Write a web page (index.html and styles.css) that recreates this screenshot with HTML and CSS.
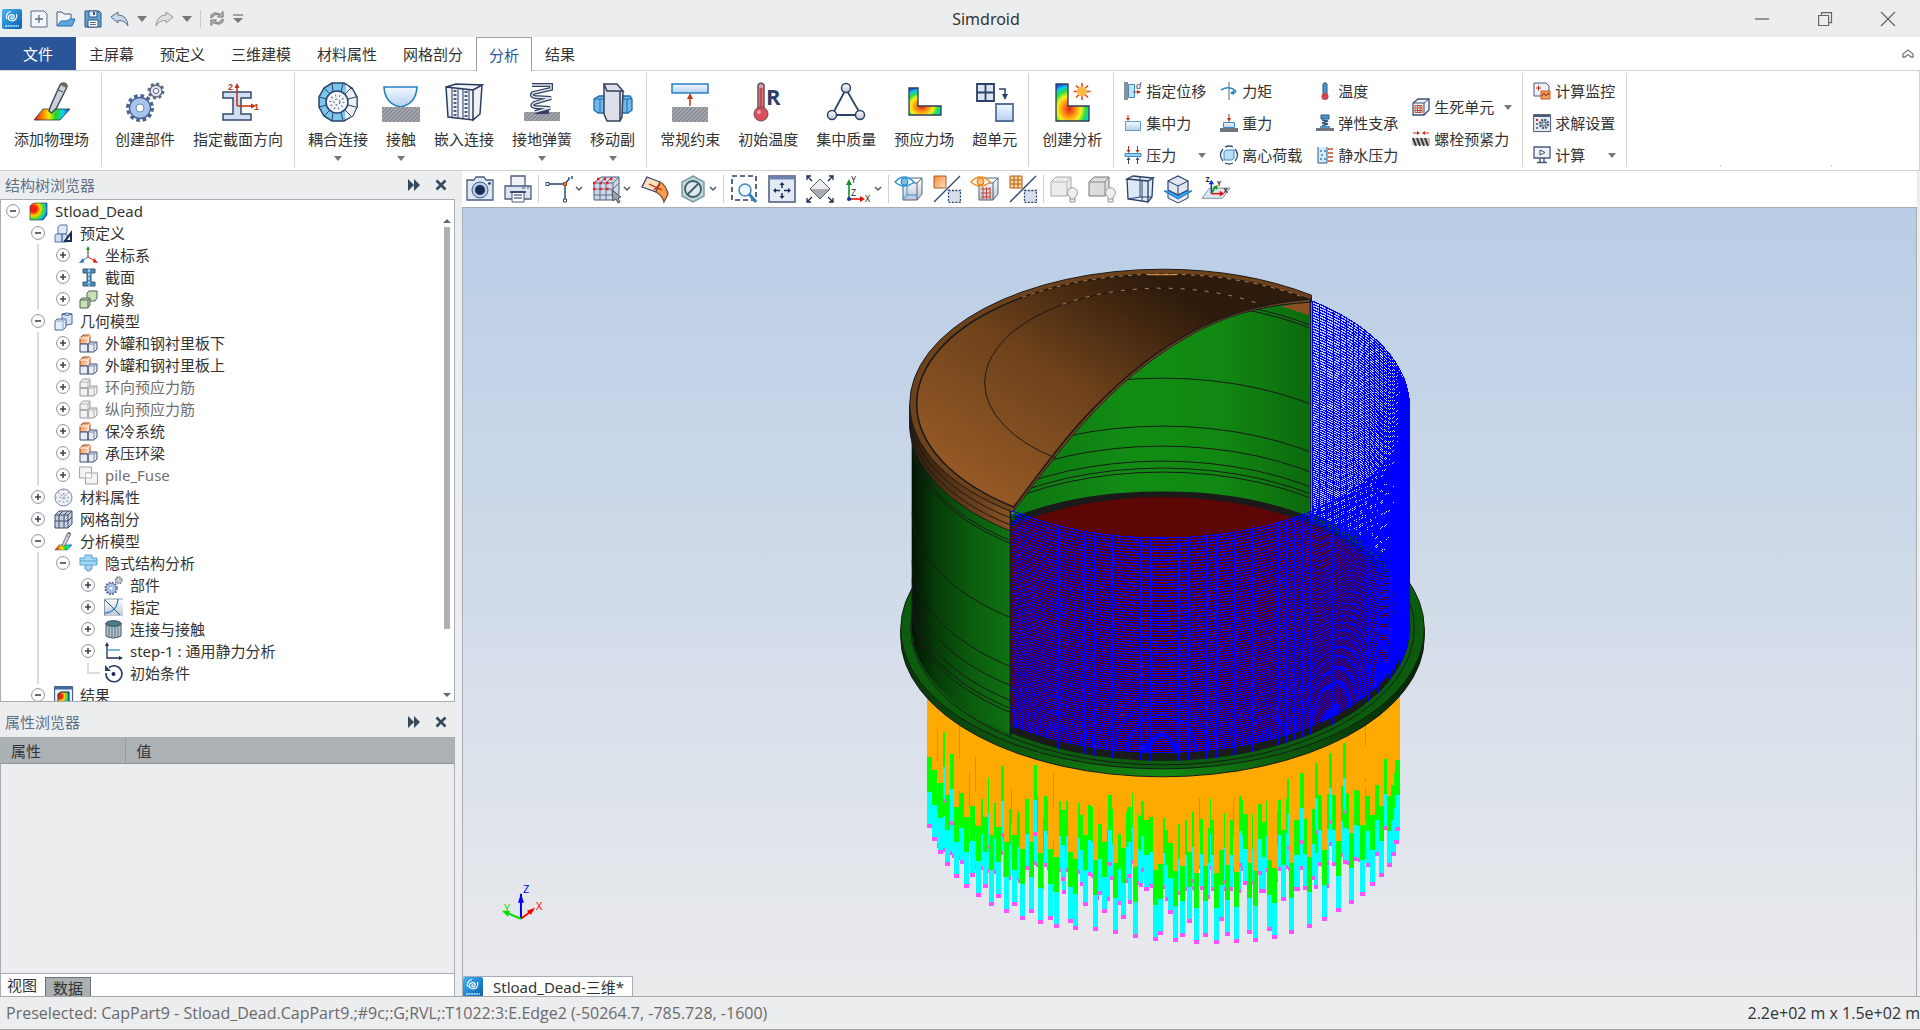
FILE: index.html
```html
<!DOCTYPE html>
<html lang="zh-CN">
<head>
    <meta charset="UTF-8">
    <title>Simdroid</title>
    <link rel="stylesheet" href="styles.css">
</head>
<body>

<!-- shared gradients and icons -->
<svg class="defs" width="0" height="0" aria-hidden="true">
    <defs>
        <linearGradient id="rainbow"><stop offset="0" stop-color="#e01010"/><stop offset=".25" stop-color="#ff8a00"/><stop offset=".42" stop-color="#f4f000"/><stop offset=".6" stop-color="#20d820"/><stop offset=".8" stop-color="#10d0f0"/><stop offset="1" stop-color="#1040e0"/></linearGradient>
        <radialGradient id="heat" cx=".4" cy=".68" r=".72"><stop offset="0" stop-color="#e02020"/><stop offset=".3" stop-color="#ff9a10"/><stop offset=".5" stop-color="#f6f020"/><stop offset=".7" stop-color="#20e040"/><stop offset=".85" stop-color="#10c8f0"/><stop offset="1" stop-color="#1050e8"/></radialGradient>
        <radialGradient id="heat2" cx=".2" cy=".35" r=".95"><stop offset="0" stop-color="#f02010"/><stop offset=".2" stop-color="#f02010"/><stop offset=".42" stop-color="#ffd000"/><stop offset=".6" stop-color="#50e020"/><stop offset=".75" stop-color="#10c0e0"/><stop offset="1" stop-color="#1020d0"/></radialGradient>
        <linearGradient id="sky" x2="0" y2="1"><stop offset="0" stop-color="#f4f9fe"/><stop offset="1" stop-color="#b4d0ee"/></linearGradient>
        <linearGradient id="steel" x2="0" y2="1"><stop offset="0" stop-color="#ffffff"/><stop offset="1" stop-color="#bcc4d4"/></linearGradient>
        <linearGradient id="orange" x2="1" y2="1"><stop offset="0" stop-color="#f28a3c"/><stop offset="1" stop-color="#fde0c4"/></linearGradient>
        <linearGradient id="brand" x2="1" y2="1"><stop offset="0" stop-color="#42b4f4"/><stop offset="1" stop-color="#0a5cac"/></linearGradient>
        <pattern id="hatch" width="4" height="4" patternUnits="userSpaceOnUse"><rect width="4" height="4" fill="#a0a4aa"/><path d="M0 4 4 0" stroke="#7d828a"/></pattern>

        <symbol id="i-logo" viewBox="0 0 20 20"><rect width="20" height="20" rx="2" fill="url(#brand)"/><path d="M10.500 8c-1.500-.8-2.600 1.300-.6 1.800 2.600.4 3.300-3.400.2-4.100C6.400 5 4.600 10 8.500 11.500c4.500 1.500 7.200-2.500 6-6.500M9 2.500C5 3 3.500 7 5 10" fill="none" stroke="#fff" stroke-width="1.200"/><path d="M3 17h14" stroke="#8fd0f8" stroke-width="2" stroke-dasharray="2 .6"/></symbol>
        <symbol id="i-plus" viewBox="0 0 14 14"><circle cx="7" cy="7" r="6.400" fill="#fff" stroke="#8c9296"/><path d="M4 7h6M7 4v6" stroke="#3c4650" stroke-width="1.600"/></symbol>
        <symbol id="i-minus" viewBox="0 0 14 14"><circle cx="7" cy="7" r="6.400" fill="#fff" stroke="#8c9296"/><path d="M4 7h6" stroke="#3c4650" stroke-width="1.600"/></symbol>
        <symbol id="i-brush" viewBox="0 0 40 40"><path d="M11 27h27l-10 11H2z" fill="url(#rainbow)" stroke="#26324a" stroke-width=".8"/><path d="M17 29l2-6 9-20q2-3 5-1.500 3 1.500 1.500 4.500l-10 20-5 5z" fill="#cdd2da" stroke="#444c5c" stroke-width="1.500"/><path d="M28 3q2-3 5-1.500 3 1.500 1.500 4.500z" fill="#7a6650"/><path d="M26 8l5 2" stroke="#444c5c"/></symbol>
        <symbol id="i-gears" viewBox="0 0 40 40"><circle cx="15" cy="26" r="12" fill="none" stroke="#4a6494" stroke-width="4" stroke-dasharray="3.600 2.683"/><circle cx="15" cy="26" r="10.500" fill="#a9c4ea" stroke="#4a6494" stroke-width="1.300"/><circle cx="15" cy="26" r="4" fill="#fff" stroke="#6b8fc4"/><circle cx="31" cy="9" r="7" fill="none" stroke="#5c6680" stroke-width="3" stroke-dasharray="2.800 2.700"/><circle cx="31" cy="9" r="6" fill="#dfe3ea" stroke="#5c6680" stroke-width="1.300"/><circle cx="31" cy="9" r="2.600" fill="#fff" stroke="#5c6680"/></symbol>
        <symbol id="i-hydro" viewBox="0 0 18 18"><path d="M2 1v16h9V1" fill="#d6ecfa" stroke="#30557e"/><path d="M4 5h2M8 5h2M5 9h2M4 13h2M8 13h2" stroke="#2d86c0" stroke-width="1.500"/><path d="M17 3h-5M17 7h-5M17 11h-5M17 15h-5" stroke="#c04a2a" stroke-width="1.300"/></symbol>
        <symbol id="i-part" viewBox="0 0 19 19"><path d="M1 4l3-3h7v7l-2 2H1z" fill="url(#orange)" stroke="#a0522c"/><path d="M1 4h8l2-3M9 4v6" fill="none" stroke="#fff"/><path d="M1 10h8v8H1zM9 10l2-2h7v7l-3 3H9z" fill="#e9ebf2" stroke="#3d4f74"/><path d="M9 10h6l3-2M15 10v8" fill="none" stroke="#7c88a4"/></symbol>
        <symbol id="i-part-off" viewBox="0 0 19 19"><path d="M1 4l3-3h7v7l-2 2H1zM1 10h8v8H1zM9 10l2-2h7v7l-3 3H9z" fill="#f1f1f1" stroke="#9a9a9a"/><path d="M1 4h8l2-3M9 4v6M9 10h6l3-2M15 10v8" fill="none" stroke="#b4b4b4"/></symbol>
        <symbol id="i-box" viewBox="0 0 28 28"><path d="M8 8l6-5h13v16l-5 6H8z" fill="url(#steel)" stroke="#55627c"/><path d="M8 8h14l5-5M22 8v17" fill="none" stroke="#55627c"/></symbol>
        <symbol id="i-slash" viewBox="0 0 28 28"><path d="M1 27 27 1" stroke="#2c4570" stroke-width="1.300"/><path d="M15.500 15.500h12v12h-12z" fill="#d8dee9" stroke="#2c4570" stroke-width="1.300" stroke-dasharray="2 1.400"/></symbol>
        <symbol id="i-bulb" viewBox="0 0 28 28"><path d="M1 7l5-5h15v13l-4 6H1z" fill="#ececec" stroke="#a8a8a8"/><path d="M1 7h16l4-5M17 7v14" fill="none" stroke="#bbb"/><path d="M20 22a5 5 0 1 1 5 0v5h-5z" fill="#eee" stroke="#999"/><path d="M20 24h5" stroke="#999"/></symbol>
        <symbol id="i-bulb-dark" viewBox="0 0 28 28"><path d="M1 7l5-5h15v13l-4 6H1z" fill="#dcdcdc" stroke="#777"/><path d="M1 7h16l4-5M17 7v14" fill="none" stroke="#888"/><path d="M20 22a5 5 0 1 1 5 0v5h-5z" fill="#eee" stroke="#999"/><path d="M20 24h5" stroke="#999"/></symbol>
        <symbol id="i-dock" viewBox="0 0 14 12"><path d="M1 0l6 6-6 6zM7 0l6 6-6 6z" fill="#34495c"/></symbol>
        <symbol id="i-x" viewBox="0 0 12 12"><path d="M1.500 1.500l9 9M10.500 1.500l-9 9" stroke="#34495c" stroke-width="2.600"/></symbol>
        <symbol id="i-chev" viewBox="0 0 8 6"><path d="M1 1l3 3 3-3" fill="none" stroke="#4a5c66" stroke-width="1.500"/></symbol>
    </defs>
</svg>

<header class="titlebar">
    <div class="quick">
        <svg width="20" height="20"><use href="#i-logo"/></svg>
        <button aria-label="新建"><svg width="18" height="18" viewBox="0 0 18 18"><path d="M1 1h13l3 3v13H1z" fill="#f2f5f9" stroke="#5d6b84"/><path d="M5 9h8M9 5v8" stroke="#5d6b84" stroke-width="1.300"/></svg></button>
        <button aria-label="打开"><svg width="20" height="18" viewBox="0 0 20 18"><path d="M1 16V2h5l2 2h7v5" fill="#eef3fa" stroke="#4a5a78"/><path d="M1 16l4-5h6l3-2h5l-3 7z" fill="#5fa8dc" stroke="#2a6cac"/></svg></button>
        <button aria-label="保存"><svg width="18" height="18" viewBox="0 0 18 18"><path d="M1 1h14l2 2v14H1z" fill="#5fa4d8" stroke="#30557e"/><path d="M5 1h8v6H5z" fill="#e6eef6" stroke="#30557e"/><path d="M9 2h2v3H9z" fill="#30557e"/><path d="M4 10h10v7H4z" fill="#fff" stroke="#30557e"/><path d="M6 12.500h6M6 14.500h6" stroke="#5d6b84"/></svg></button>
        <button aria-label="撤销"><svg width="19" height="16" viewBox="0 0 19 16"><path d="M1 6l7-5v3q9 0 10 11-3-6-10-5.500V12z" fill="#c8d8ec" stroke="#5c6a84"/></svg></button>
        <button aria-label="撤销列表"><svg width="10" height="6" viewBox="0 0 10 6"><path d="M0 0h10L5 6z" fill="#777"/></svg></button>
        <button aria-label="重做"><svg width="19" height="16" viewBox="0 0 19 16"><path d="M18 6l-7-5v3Q2 4 1 15q3-6 10-5.500V12z" fill="#dcdee0" stroke="#999"/></svg></button>
        <button aria-label="重做列表"><svg width="10" height="6" viewBox="0 0 10 6"><path d="M0 0h10L5 6z" fill="#777"/></svg></button>
        <i class="quick-sep"></i>
        <button aria-label="刷新"><svg width="16" height="17" viewBox="0 0 17 17"><path d="M2 8V5q3-4 8-2l2 1 3-3v6H9l2-2Q6 3 4 7zM15 9v3q-3 4-8 2l-2-1-3 3v-6h6l-2 2q5 2 7-2z" fill="#b0b0b0" stroke="#777"/></svg></button>
        <button aria-label="自定义"><svg width="10" height="10" viewBox="0 0 10 10"><path d="M0 1h10" stroke="#777" stroke-width="1.300"/><path d="M0 4h10L5 9z" fill="#777"/></svg></button>
    </div>
    <h1>Simdroid</h1>
    <div class="window-buttons">
        <button aria-label="最小化"><svg width="14" height="14" viewBox="0 0 14 14"><path d="M0 7h14" stroke="#666" stroke-width="1.300"/></svg></button>
        <button aria-label="还原"><svg width="14" height="14" viewBox="0 0 14 14"><path d="M.6 3.500h10v10H.6zM3.500 3.500V.6h10v10h-3" fill="none" stroke="#666" stroke-width="1.200"/></svg></button>
        <button aria-label="关闭"><svg width="14" height="14" viewBox="0 0 14 14"><path d="M0 0l14 14M14 0L0 14" stroke="#666" stroke-width="1.300"/></svg></button>
    </div>
</header>

<nav class="tabs">
    <button class="file">文件</button>
    <button>主屏幕</button>
    <button>预定义</button>
    <button>三维建模</button>
    <button>材料属性</button>
    <button>网格剖分</button>
    <button class="active">分析</button>
    <button>结果</button>
    <button class="collapse" aria-label="收起功能区"><svg width="12" height="10" viewBox="0 0 12 10"><path d="M1 5l5-4 5 4v3H9L6 5.500 3 8H1z" fill="none" stroke="#777c84" stroke-width="1.300"/></svg></button>
</nav>

<section class="ribbon">
    <div class="group">
        <button class="big"><svg><use href="#i-brush"/></svg>添加物理场</button>
    </div>
    <div class="group">
        <button class="big"><svg><use href="#i-gears"/></svg>创建部件</button>
        <button class="big"><svg viewBox="0 0 40 40"><path d="M5 10h28v6H23v16h10v6H5v-6h10V16H5z" fill="#cfdef0" stroke="#33486c" stroke-width="1.500"/><path d="M19 24V5M19 24h14" stroke="#c03010" stroke-width="1.500"/><path d="M16.500 6h5L19 1zM33 21.500v5l5-2.500z" fill="#c03010"/><text x="10" y="8" class="mark">2</text><text x="36" y="28" class="mark">1</text></svg>指定截面方向</button>
    </div>
    <div class="group">
        <button class="big drop"><svg viewBox="0 0 40 40"><path d="M14 1h12l8 5 5 9v10l-5 9-8 5H14l-8-5-5-9V15l5-9z" fill="#7cc6ee" stroke="#2a4468" stroke-width="1.500"/><path d="M28 2l7 6 4 8v9l-4 9-8 4" fill="#eef1f6" stroke="#2a4468"/><circle cx="19" cy="20" r="11" fill="#f4f6fa" stroke="#2a4468" stroke-width="1.500"/><path d="M14 1l1 9M25 1l-2 9M6 6l6 6M33 6l-6 6M1 15l8 2M30 17l8-2M1 25l8-2M30 23l8 2M6 34l6-6M33 34l-6-6M14 39l1-9M25 39l-2-9" stroke="#2a4468"/><circle cx="19" cy="20" r="3" fill="none" stroke="#2a4468" stroke-dasharray="2 2"/><circle cx="19" cy="20" r="6.500" fill="none" stroke="#55709a" stroke-width="2" stroke-dasharray="1 3"/></svg>耦合连接</button>
        <button class="big drop"><svg viewBox="0 0 40 40"><path d="M3 5h33q-1 17-16.500 20Q4 22 3 5z" fill="url(#sky)" stroke="#2582c0" stroke-width="1.600"/><path d="M1 25h38v15H1z" fill="url(#hatch)"/></svg>接触</button>
        <button class="big"><svg viewBox="0 0 40 40"><path d="M2 5l10-3 26 1-9 5zM2 5l27 3v30L4 35zM38 3l-2 29-7 6V8z" fill="#f0f2f8" stroke="#2a3c60" stroke-width="1.500"/><path d="M8 6v29M14 7v29M19 7v30M25 8v30" stroke="#2a3c60"/><path d="M11 8v27M22 9v28" stroke="#4c6088" stroke-width="3" stroke-dasharray="2 2"/></svg>嵌入连接</button>
        <button class="big drop"><svg viewBox="0 0 40 40"><path d="M2 30h36v9H2z" fill="url(#hatch)"/><path d="M10 3h19v4L11 11q-3 3 2 4l16 1-17 5q-4 3 1 4l15 1-15 4h14" fill="none" stroke="#33435f" stroke-width="4"/><path d="M10 3h19v4L11 11q-3 3 2 4l16 1-17 5q-4 3 1 4l15 1-15 4" fill="none" stroke="#dfe5ee" stroke-width="1.500"/></svg>接地弹簧</button>
        <button class="big drop"><svg viewBox="0 0 40 40"><path d="M1 17l5-3h31l2 3v11l-4 3H5l-4-3z" fill="#6fbaea" stroke="#1f6aa8" stroke-width="1.300"/><path d="M1 17h38M7 17v13M34 17v13" stroke="#1f6aa8"/><path d="M11 2h13l6 7-3 0H14zM14 9h13v30H14l-3-7V2zM27 9l3 0-1 26-2 4z" fill="#dde0ea" stroke="#33405c" stroke-width="1.500"/></svg>移动副</button>
    </div>
    <div class="group">
        <button class="big"><svg viewBox="0 0 40 40"><path d="M2 2h36v9H2z" fill="url(#sky)" stroke="#2582c0" stroke-width="1.500"/><path d="M2 25h36v15H2z" fill="url(#hatch)"/><path d="M20 24V14" stroke="#c03a10" stroke-width="1.500"/><path d="M17 17h6l-3-6z" fill="#c03a10"/></svg>常规约束</button>
        <button class="big"><svg viewBox="0 0 40 40"><path d="M10 27V3q3-4 6 0v24" fill="#dca0a4" stroke="#62505c" stroke-width="1.500"/><path d="M13 6v22" stroke="#cc4850" stroke-width="3"/><circle cx="13" cy="32" r="7" fill="#d8505c" stroke="#704a58"/><circle cx="11" cy="30" r="2" fill="#f4a0a8"/><text x="18" y="23" class="letter">R</text></svg>初始温度</button>
        <button class="big"><svg viewBox="0 0 40 40"><path d="M20 7L6 33h29z" fill="none" stroke="#2c4068" stroke-width="1.800"/><g fill="url(#steel)" stroke="#2c4068" stroke-width="1.500"><circle cx="20" cy="6" r="4.500"/><circle cx="6" cy="33" r="4.500"/><circle cx="34" cy="33" r="4.500"/></g></svg>集中质量</button>
        <button class="big"><svg viewBox="0 0 40 40"><path d="M5 6h9v18h23v9H5z" fill="url(#heat)" stroke="#303c54" stroke-width="1.300"/></svg>预应力场</button>
        <button class="big"><svg viewBox="0 0 40 40"><path d="M2 2h17v17H2zM10.500 2v17M2 10.500h17" fill="#dce4f2" stroke="#2c4068" stroke-width="1.800"/><path d="M21 22h17v17H21z" fill="url(#sky)" stroke="#55719c" stroke-width="1.800"/><path d="M24 7h6v6" fill="none" stroke="#2c4068" stroke-width="1.500"/><path d="M27 12h6L30 18z" fill="#2c4068"/></svg>超单元</button>
    </div>
    <div class="group">
        <button class="big"><svg viewBox="0 0 40 40"><path d="M4 2h12v22h21v15H4z" fill="url(#heat)" stroke="#303c54" stroke-width="1.300"/><path d="M30 1v17M21.500 9.500h17M24 3.500l12 12M36 3.500l-12 12" stroke="#e04820" stroke-width="1.600"/><circle cx="30" cy="9.500" r="5" fill="#fdb848"/></svg>创建分析</button>
    </div>
    <div class="group small-group">
        <div class="column">
            <button class="small"><svg viewBox="0 0 18 18"><path d="M0 0h4v18H0z" fill="#8c9098"/><path d="M4.500 2.500h6v13h-6z" fill="#c2e2f6" stroke="#3c8cc4"/><path d="M9 10h7" stroke="#c03010"/><path d="M13 8l4 2-4 2z" fill="#c03010"/><text x="12" y="7" class="tiny">d</text></svg>指定位移</button>
            <button class="small"><svg viewBox="0 0 18 18"><path d="M1.500 7.500h15v9h-15z" fill="url(#sky)" stroke="#5a9cc8"/><path d="M4 1v5" stroke="#c03010"/><path d="M2 4h4L4 7z" fill="#c03010"/></svg>集中力</button>
            <button class="small"><svg viewBox="0 0 18 18"><path d="M1 7.500h16v3H1z" fill="#9cd0f0" stroke="#3c8cc4"/><path d="M4.500 0v6M13.500 0v6" stroke="#c03010"/><path d="M2.500 4h4l-2 3zM11.500 4h4l-2 3z" fill="#c03010"/><path d="M4.500 12v6M13.500 12v6" stroke="#34486c"/><path d="M2.500 14h4l-2-3zM11.500 14h4l-2-3z" fill="#34486c"/></svg>压力<i class="arrow"></i></button>
        </div>
        <div class="column">
            <button class="small"><svg viewBox="0 0 18 18"><path d="M9 0v18" stroke="#5a6880"/><path d="M1 8q8-5 15 1M16 9q-2 3-5 2" fill="none" stroke="#2d86c0" stroke-width="1.500"/><path d="M14 8l-4 3 4 2z" fill="#2d86c0"/></svg>力矩</button>
            <button class="small"><svg viewBox="0 0 18 18"><path d="M3.500 8.500h11v5h-11z" fill="url(#sky)" stroke="#3c8cc4"/><path d="M0 14h18v4H0z" fill="#70767e"/><path d="M9 0v6" stroke="#c03010"/><path d="M7 4h4L9 8z" fill="#c03010"/></svg>重力</button>
            <button class="small"><svg viewBox="0 0 18 18"><path d="M4 6l2-2h8v8l-2 2H4z" fill="#b8dcf4" stroke="#3c8cc4"/><path d="M3 15q-5-6 0-12M15 3q5 6 0 12M5 1q4-2 8 0M5 17q4 2 8 0" fill="none" stroke="#34486c" stroke-width="1.300"/></svg>离心荷载</button>
        </div>
        <div class="column">
            <button class="small"><svg viewBox="0 0 18 18"><path d="M7 12V2q2-3 4 0v10z" fill="#4c98cc" stroke="#30557e"/><circle cx="9" cy="14.500" r="3.500" fill="#cc4450"/></svg>温度</button>
            <button class="small"><svg viewBox="0 0 18 18"><path d="M5 1h8v4H5z" fill="#4c98cc" stroke="#30557e"/><path d="M6 6l6 1-6 2 6 1-6 2" fill="none" stroke="#30557e" stroke-width="1.500"/><path d="M4 12h10v2H4z" fill="#4c98cc"/><path d="M0 14h18v3H0z" fill="#70767e"/></svg>弹性支承</button>
            <button class="small"><svg><use href="#i-hydro"/></svg>静水压力</button>
        </div>
        <div class="column wide">
            <button class="small"><svg viewBox="0 0 18 18"><path d="M1 5l5-4h11v11l-5 5H1z" fill="#eef1f7" stroke="#3d4f74" stroke-width="1.300"/><path d="M1 5h11l5-4M12 5v12" fill="none" stroke="#3d4f74"/><path d="M3 7.500h7v7H3zM5.500 7v8M8 7v8M3 10h7M3 12.500h7" fill="none" stroke="#c05030"/></svg>生死单元<i class="arrow"></i></button>
            <button class="small"><svg viewBox="0 0 18 18"><path d="M1 3h5M17 3h-5" stroke="#c03010"/><path d="M5 1l3 2-3 2zM13 1l-3 2 3 2z" fill="#c03010"/><path d="M0 8h18v7H0z" fill="#cdbfae"/><path d="M1 8l3 8M5 8l3 8M9 8l3 8M13 8l3 8" stroke="#333c4c" stroke-width="2"/></svg>螺栓预紧力</button>
        </div>
    </div>
    <div class="group small-group">
        <div class="column last">
            <button class="small"><svg viewBox="0 0 18 18"><path d="M1 1h12l3 3v10H1z" fill="#eef1f7" stroke="#4a5a78"/><path d="M3 6h5M5.500 3.500v5" stroke="#c03010"/><path d="M8 9h9v8H8z" fill="#f2a05c" stroke="#c05a20"/><path d="M9 14l2-3 2 3 2-3 1 2" fill="none" stroke="#a02810"/></svg>计算监控</button>
            <button class="small"><svg viewBox="0 0 18 18"><path d="M.6.600h17v17H.6z" fill="#e6ebf3" stroke="#4a5a78"/><path d="M1 2h16" stroke="#4a5a78" stroke-width="2"/><path d="M3 5h2v2H3z" fill="#c03010"/><path d="M3 9h2v2H3zM3 13h2v2H3z" fill="#6c7c98"/><circle cx="11" cy="10" r="4" fill="none" stroke="#4a5a78" stroke-width="2.500" stroke-dasharray="2 1.100"/><circle cx="11" cy="10" r="2" fill="none" stroke="#4a5a78"/></svg>求解设置</button>
            <button class="small"><svg viewBox="0 0 18 18"><path d="M1 1h16v11H1z" fill="#eef1f7" stroke="#4a5a78" stroke-width="1.300"/><path d="M7 4l5 2.500L7 9z" fill="#fff" stroke="#34486c"/><path d="M7 12v4M11 12v4M4 16.500h10" stroke="#4a5a78" stroke-width="1.500"/></svg>计算<i class="arrow"></i></button>
        </div>
    </div>
    <div class="ribbon-rest"></div>
</section>

<main>
    <aside class="dock">
        <div class="dock-title">
            <h2>结构树浏览器</h2>
            <button aria-label="停靠"><svg width="14" height="12"><use href="#i-dock"/></svg></button>
            <button aria-label="关闭"><svg width="12" height="12"><use href="#i-x"/></svg></button>
        </div>
        <div class="tree-box">
            <ul class="tree">
                <li>
                    <div class="row"><button aria-label="折叠"><svg><use href="#i-minus"/></svg></button><svg viewBox="0 0 19 19"><path d="M1 4q2-3 5-3h12v12l-4 5H1z" fill="url(#heat2)" stroke="#2a2a40" stroke-width=".6"/></svg><span>Stload_Dead</span></div>
                    <ul>
                        <li>
                            <div class="row"><button aria-label="折叠"><svg><use href="#i-minus"/></svg></button><svg viewBox="0 0 19 19"><path d="M4 3l2-2h7v7l-2 2H4z" fill="#dceaf8" stroke="#5874a4"/><path d="M1 11l1-1h6v8H1zM8 10h5v8H8z" fill="#cfdff2" stroke="#5874a4"/><path d="M18 6v12h-9z" fill="#1c2c54"/><path d="M16 12v4h-3z" fill="#fff"/></svg><span>预定义</span></div>
                            <ul class="branch">
                                <li><div class="row"><button aria-label="展开"><svg><use href="#i-plus"/></svg></button><svg viewBox="0 0 19 19"><path d="M9 11V3" stroke="#333"/><path d="M7 4h4L9 0z" fill="#10a030"/><path d="M9 11l-6 4" stroke="#3078b8"/><path d="M4 12l-4 5 5-.5z" fill="#3078b8"/><path d="M9 11l7 4" stroke="#e02020"/><path d="M15 12l4 5-5-.5z" fill="#e02020"/></svg><span>坐标系</span></div></li>
                                <li><div class="row"><button aria-label="展开"><svg><use href="#i-plus"/></svg></button><svg viewBox="0 0 19 19"><path d="M4 1h12v4h-4v9h4v4H4v-4h4V5H4z" fill="#4a8cb8" stroke="#34587c"/><path d="M10 1v17" stroke="#fff" stroke-dasharray="3 1"/></svg><span>截面</span></div></li>
                                <li><div class="row"><button aria-label="展开"><svg><use href="#i-plus"/></svg></button><svg viewBox="0 0 19 19"><path d="M8 3l2-2h8v7l-2 3H8z" fill="#c8e0b4" stroke="#4e6458"/><path d="M1 10l2-2h8v7l-2 3H1z" fill="#c8e0b4" stroke="#4e6458"/><path d="M1 10h8l2-2M9 10v8" fill="none" stroke="#4e6458"/></svg><span>对象</span></div></li>
                            </ul>
                        </li>
                        <li>
                            <div class="row"><button aria-label="折叠"><svg><use href="#i-minus"/></svg></button><svg viewBox="0 0 19 19"><path d="M8 2q5-2 10 0v10q-5 2-10 0z" fill="#d4e4f6" stroke="#4a6492"/><path d="M8 2q5 3 10 0" fill="none" stroke="#4a6492"/><path d="M1 9l2-2h9v8l-3 3H1z" fill="#e2eefa" stroke="#4a6492"/><path d="M1 9h8l3-2M9 9v9" fill="none" stroke="#8ca4cc"/></svg><span>几何模型</span></div>
                            <ul class="branch">
                                <li><div class="row"><button aria-label="展开"><svg><use href="#i-plus"/></svg></button><svg><use href="#i-part"/></svg><span>外罐和钢衬里板下</span></div></li>
                                <li><div class="row"><button aria-label="展开"><svg><use href="#i-plus"/></svg></button><svg><use href="#i-part"/></svg><span>外罐和钢衬里板上</span></div></li>
                                <li><div class="row off"><button aria-label="展开"><svg><use href="#i-plus"/></svg></button><svg><use href="#i-part-off"/></svg><span>环向预应力筋</span></div></li>
                                <li><div class="row off"><button aria-label="展开"><svg><use href="#i-plus"/></svg></button><svg><use href="#i-part-off"/></svg><span>纵向预应力筋</span></div></li>
                                <li><div class="row"><button aria-label="展开"><svg><use href="#i-plus"/></svg></button><svg><use href="#i-part"/></svg><span>保冷系统</span></div></li>
                                <li><div class="row"><button aria-label="展开"><svg><use href="#i-plus"/></svg></button><svg><use href="#i-part"/></svg><span>承压环梁</span></div></li>
                                <li><div class="row off"><button aria-label="展开"><svg><use href="#i-plus"/></svg></button><svg viewBox="0 0 19 19"><path d="M.6 1h12v11H.6z" fill="#f4f4f4" stroke="#a0a0a0"/><path d="M6.500 7h12v11h-12z" fill="#f4f4f4" stroke="#a0a0a0"/><path d="M6.500 12V7h6v5z" fill="#fff" stroke="#bbb"/></svg><span>pile_Fuse</span></div></li>
                            </ul>
                        </li>
                        <li><div class="row"><button aria-label="展开"><svg><use href="#i-plus"/></svg></button><svg viewBox="0 0 19 19"><circle cx="9.500" cy="9.500" r="8.500" fill="#eef0f4" stroke="#7c88a0"/><path d="M4 4l11 11M15 4L4 15M9.500 1v17M1 9.500h17" stroke="#a8b0c0" stroke-width="1.500" stroke-dasharray="2 2"/></svg><span>材料属性</span></div></li>
                        <li><div class="row"><button aria-label="展开"><svg><use href="#i-plus"/></svg></button><svg viewBox="0 0 19 19"><path d="M1 5l4-4h13v13l-4 4H1z" fill="#c4cede" stroke="#3c4c6c"/><path d="M1 5h13l4-4M14 5v13M1 11h13l4-4M5 5v13M10 5v13M5 5l4-4M10 5l4-4" fill="none" stroke="#3c4c6c"/></svg><span>网格剖分</span></div></li>
                        <li>
                            <div class="row"><button aria-label="折叠"><svg><use href="#i-minus"/></svg></button><svg><use href="#i-brush"/></svg><span>分析模型</span></div>
                            <ul class="branch">
                                <li>
                                    <div class="row"><button aria-label="折叠"><svg><use href="#i-minus"/></svg></button><svg viewBox="0 0 19 19"><path d="M6 1h7v3h5v7h-5v4h-2v2H8v-2H6v-4H1V4h5z" fill="#a4d8f4" stroke="#5aa4d0"/><path d="M1 7h17M6 11h7" stroke="#5aa4d0"/></svg><span>隐式结构分析</span></div>
                                    <ul>
                                        <li><div class="row"><button aria-label="展开"><svg><use href="#i-plus"/></svg></button><svg><use href="#i-gears"/></svg><span>部件</span></div></li>
                                        <li><div class="row"><button aria-label="展开"><svg><use href="#i-plus"/></svg></button><svg viewBox="0 0 19 19"><path d="M0 1h19v17H0z" fill="url(#steel)"/><path d="M.5 18V1H19" fill="none" stroke="#8c98ac"/><path d="M1 2l15 15" stroke="#3c5078"/><path d="M1 15Q13 14 14 1" fill="none" stroke="#2d86c0" stroke-width="1.300"/></svg><span>指定</span></div></li>
                                        <li><div class="row"><button aria-label="展开"><svg><use href="#i-plus"/></svg></button><svg viewBox="0 0 19 19"><path d="M2 3v13q7 4 15 0V3" fill="#b8c4cc" stroke="#3c5864"/><ellipse cx="9.500" cy="3.500" rx="7.500" ry="2.800" fill="#4c7c8c" stroke="#2c4854"/><path d="M5 6v12M8 6v12M11 6v12M14 6v12" stroke="#50707c"/></svg><span>连接与接触</span></div></li>
                                        <li><div class="row"><button aria-label="展开"><svg><use href="#i-plus"/></svg></button><svg viewBox="0 0 19 19"><path d="M3 3v13h13" fill="none" stroke="#1c2c54" stroke-width="1.300"/><path d="M1 4h4L3 0zM15 14v4l4-2z" fill="#1c2c54"/><path d="M3 8h13" stroke="#50a0d8" stroke-width="1.500"/></svg><span>step-1 : 通用静力分析</span></div></li>
                                        <li><div class="row"><i class="stub"></i><svg viewBox="0 0 19 19"><path d="M5 3.500A8 8 0 1 1 2 9" fill="none" stroke="#2c4068" stroke-width="1.600"/><path d="M1 1v6h6z" fill="#2c4068"/><circle cx="9.500" cy="10" r="2" fill="#1c2c54"/></svg><span>初始条件</span></div></li>
                                    </ul>
                                </li>
                            </ul>
                        </li>
                        <li><div class="row"><button aria-label="折叠"><svg><use href="#i-minus"/></svg></button><svg viewBox="0 0 19 19"><path d="M.6.600h18v18H.6z" fill="#e8eef8" stroke="#3c5078"/><path d="M0 2h19" stroke="#4468a0" stroke-width="3"/><path d="M4 8l3-2h8v9l-3 3H4z" fill="url(#heat2)" stroke="#222"/></svg><span>结果</span></div></li>
                    </ul>
                </li>
            </ul>
            <div class="scroll"><i class="up"></i><i class="thumb"></i><i class="down"></i></div>
        </div>
        <div class="dock-title second">
            <h2>属性浏览器</h2>
            <button aria-label="停靠"><svg width="14" height="12"><use href="#i-dock"/></svg></button>
            <button aria-label="关闭"><svg width="12" height="12"><use href="#i-x"/></svg></button>
        </div>
        <div class="props-box">
            <table class="props">
                <thead><tr><th>属性</th><th>值</th></tr></thead>
            </table>
        </div>
        <div class="dock-tabs">
            <button>视图</button>
            <button class="pressed">数据</button>
        </div>
    </aside>

    <section class="workspace">
        <div class="toolbar">
            <button aria-label="截图"><svg viewBox="0 0 28 28"><path d="M1 5h7l2-3h8l2 3h7v20H1z" fill="#dbe7f5" stroke="#4c5c7c" stroke-width="1.300"/><circle cx="14" cy="15" r="8" fill="#b8cce6" stroke="#4c5c7c"/><circle cx="14" cy="15" r="5" fill="#1c2c58"/><circle cx="23.500" cy="8.500" r="1.300" fill="#1c2c58"/></svg></button>
            <button aria-label="打印"><svg viewBox="0 0 28 28"><path d="M7 11V1h14v10" fill="#f0f3f8" stroke="#4c5c7c" stroke-width="1.300"/><path d="M1 11h26v13H1z" fill="#dbe3ef" stroke="#4c5c7c" stroke-width="1.300"/><path d="M8 17h12v10H8z" fill="#fff" stroke="#4c5c7c"/><path d="M10 20h8M10 23h8" stroke="#1c2c58"/><path d="M6 17h16" stroke="#1c2c58" stroke-width="1.500"/><path d="M18 13h3M23 13h2" stroke="#4c5c7c"/></svg></button>
            <i class="sep"></i>
            <button class="menu" aria-label="选点"><svg viewBox="0 0 28 28"><path d="M2 9h18v17M20 9l4-5V2M27 1v3" fill="none" stroke="#2c4068" stroke-width="1.400"/><path d="M1 7.500h3v3H1zM18.500 24h3v3h-3z" fill="#fff" stroke="#2c4068"/><path d="M18.500 7.500h3v3h-3z" fill="#f08040" stroke="#a04010"/></svg><svg class="chev"><use href="#i-chev"/></svg></button>
            <button class="menu" aria-label="选网格"><svg viewBox="0 0 28 28"><path d="M1 8l7-6h18v17l-5 6H1z" fill="#d0d8e6" stroke="#4c5c7c"/><path d="M1 8h19l6-6M20 8v17M7 8v17M13 8v17M1 14h19l6-6M1 20h19M7 8l6-6M13 8l6-6" fill="none" stroke="#5a6a90"/><path d="M0 8h18M0 14h18M4 4h18" stroke="#f02020" stroke-width="2.400" stroke-dasharray="2.500 4"/><path d="M19 15l1 11 3-2 2 4 2-1-2-4 3-1z" fill="#9aa0a8" stroke="#50565e"/></svg><svg class="chev"><use href="#i-chev"/></svg></button>
            <button aria-label="选面"><svg viewBox="0 0 28 28"><path d="M6 2l13 5-4 10L1 12z" fill="#fde0c0" stroke="#34406c" stroke-width="1.300"/><path d="M19 7q6 3 8 12l-4 8q-2-7-8-10z" fill="#f4a050" stroke="#7c4c28" stroke-width="1.300"/><path d="M8 9l13 6M19 9l-6 6" stroke="#c02810" stroke-width="1.300"/></svg></button>
            <button class="menu" aria-label="取消选择"><svg viewBox="0 0 28 28"><path d="M14 1l11 6v14l-11 6-11-6V7z" fill="#c0d8d8" stroke="#7c9ca4" stroke-width="1.500"/><circle cx="14" cy="14" r="8" fill="#dce8ea" stroke="#3c5c6c" stroke-width="1.800"/><path d="M8.500 19.500l11-11" stroke="#3c5c6c" stroke-width="1.800"/></svg><svg class="chev"><use href="#i-chev"/></svg></button>
            <i class="sep"></i>
            <button aria-label="框选缩放"><svg viewBox="0 0 28 28"><path d="M2 1h24v24H2z" fill="none" stroke="#2c4068" stroke-width="1.600" stroke-dasharray="5 3"/><circle cx="15" cy="15" r="6" fill="#eef7fd" stroke="#4a8cc0" stroke-width="1.600"/><path d="M19 19l7 8" stroke="#3080c0" stroke-width="3"/></svg></button>
            <button aria-label="适合窗口"><svg viewBox="0 0 28 28"><path d="M1 1h26v26H1z" fill="#e4eaf4" stroke="#4a5a7c" stroke-width="1.500"/><path d="M1 3h26" stroke="#6c84b0" stroke-width="3"/><path d="M14 9v4M14 18v4M8 15.500h4M16 15.500h4" stroke="#1c2c58" stroke-width="1.500"/><path d="M11.500 10h5l-2.500-3zM11.500 21h5l-2.500 3zM8 13v5l-3-2.500zM20 13v5l3-2.500z" fill="#1c2c58"/></svg></button>
            <button aria-label="等轴测"><svg viewBox="0 0 28 28"><path d="M14 4l10 10H4z" fill="#ececec"/><path d="M4 14h20L14 24z" fill="#a8acb0"/><path d="M14 4l10 10-10 10L4 14z" fill="none" stroke="#55606c"/><path d="M1 5V1h4M23 1h4v4M27 23v4h-4M5 27H1v-4M1 1l5 5M27 1l-5 5M27 27l-5-5M1 27l5-5" fill="none" stroke="#1c2c58" stroke-width="1.300"/></svg></button>
            <button class="menu" aria-label="视向"><svg viewBox="0 0 28 28"><path d="M5 24V8" stroke="#109030" stroke-width="1.600"/><path d="M2 10h6L5 4z" fill="#109030"/><path d="M5 24h13" stroke="#e01010" stroke-width="1.600"/><path d="M16 21v6l5-3z" fill="#e01010"/><circle cx="5" cy="24" r="2" fill="#1030a0"/><text x="7" y="8" class="axis">Y</text><text x="7" y="21" class="axis">Z</text><text x="21" y="27" class="axis">X</text></svg><svg class="chev"><use href="#i-chev"/></svg></button>
            <i class="sep"></i>
            <button aria-label="显示几何"><svg viewBox="0 0 28 28"><use href="#i-box"/><path d="M12 8v12h10M12 20l-4 5" fill="none" stroke="#2d96d8"/><path d="M0 7q9-10 19 0-10 8-19 0z" fill="#fff" stroke="#2d96d8" stroke-width="1.400"/><circle cx="9.500" cy="6.500" r="3.500" fill="#7cc4f0" stroke="#2d78b8"/></svg></button>
            <button aria-label="几何开关"><svg viewBox="0 0 28 28"><use href="#i-slash"/><path d="M1 1h12v12H1z" fill="url(#orange)" stroke="#b05c24"/></svg></button>
            <button aria-label="显示网格"><svg viewBox="0 0 28 28"><use href="#i-box"/><path d="M10 14h10M10 18h10M10 22h10M12 12v12M15.500 12v12M19 12v12" stroke="#c04838"/><path d="M0 7q9-10 19 0-10 8-19 0z" fill="#fff" stroke="#f09020" stroke-width="1.400"/><circle cx="9.500" cy="6.500" r="3.500" fill="#fcc070" stroke="#d87010"/></svg></button>
            <button aria-label="网格开关"><svg viewBox="0 0 28 28"><use href="#i-slash"/><path d="M1 1h12v12H1zM5 1v12M9 1v12M1 5h12M1 9h12" fill="#fcd8a0" stroke="#b05c10"/></svg></button>
            <i class="sep"></i>
            <button aria-label="隐藏部件"><svg><use href="#i-bulb"/></svg></button>
            <button aria-label="显示部件"><svg><use href="#i-bulb-dark"/></svg></button>
            <button aria-label="透明"><svg viewBox="0 0 28 28"><path d="M1 4l6-3 20 2-5 3zM1 4l21 2v21L2 24zM27 3l-1 19-4 5V6z" fill="#dce8f6" stroke="#2c4068" stroke-width="1.300"/><path d="M14 2v20l-12 2M14 22l12 0M16 6v20" fill="none" stroke="#2c4068"/></svg></button>
            <button aria-label="剖切"><svg viewBox="0 0 28 28"><path d="M4 18l10-4 10 4v5l-10 5-10-5z" fill="#e8ecf4" stroke="#2c4068"/><path d="M0 16h28l-14 8z" fill="#3ca0f0" stroke="#1c78c8"/><path d="M4 6l10-5 10 5v9l-10 5-10-5z" fill="#e2e6f0" stroke="#2c4068" stroke-width="1.200"/><path d="M4 6l10 5 10-5M14 11v9" fill="none" stroke="#2c4068"/></svg></button>
            <button aria-label="坐标平面"><svg viewBox="0 0 30 28"><path d="M8 13h22l-8 11H0z" fill="#dce6f0" stroke="#7c8ca0"/><path d="M10 19V7" stroke="#1030d0" stroke-width="1.600"/><path d="M7 9h6l-3-5z" fill="#1030d0"/><path d="M10 19l4-7" stroke="#10a020" stroke-width="2"/><path d="M12 11l5-1-1 5z" fill="#10a020"/><path d="M10 19h11" stroke="#e01010" stroke-width="1.600"/><path d="M19 16v6l5-3z" fill="#e01010"/><text x="4" y="6" class="tri">Z</text><text x="16" y="11" class="tri">Y</text><text x="23" y="18" class="tri">X</text></svg></button>
        </div>
        <div class="viewport">
            <svg class="model" viewBox="462 207 1454 768">
                <defs>
                    <linearGradient id="roof" gradientUnits="userSpaceOnUse" x1="1150" y1="275" x2="1010" y2="500"><stop offset="0" stop-color="#2e1b0c"/><stop offset=".15" stop-color="#40260f"/><stop offset=".5" stop-color="#6e421b"/><stop offset="1" stop-color="#935825"/></linearGradient>
                    <linearGradient id="wall"><stop offset="0" stop-color="#021402"/><stop offset=".25" stop-color="#063c08"/><stop offset=".6" stop-color="#0b5c0e"/><stop offset="1" stop-color="#0f7211"/></linearGradient>
                    <linearGradient id="inner"><stop offset="0" stop-color="#0e7410"/><stop offset=".4" stop-color="#128d14"/><stop offset=".7" stop-color="#118811"/><stop offset="1" stop-color="#0c6a0e"/></linearGradient>
                    <linearGradient id="band"><stop offset="0" stop-color="#2e1b0c"/><stop offset="1" stop-color="#8a5223"/></linearGradient>
                    <linearGradient id="edge"><stop offset="0" stop-color="#083408"/><stop offset=".5" stop-color="#138a13"/><stop offset="1" stop-color="#052405"/></linearGradient>
                    <clipPath id="innerClip"><path id="innerShape" d="M1012 511C1040 475 1065 440 1094 410 1130 373 1160 350 1201 328 1235 311 1270 303 1309 301V519A248 134 0 0 0 1012 519z"/></clipPath>
                    <clipPath id="leftClip"><path d="M911 425A251 134 0 0 0 1010 529V733A251 134 0 0 1 911 626z"/></clipPath>
                </defs>
                <g id="piles" shape-rendering="crispEdges"></g>
                <!-- foundation slab -->
                <path d="M900 628v8a262 140 0 0 0 524 0v-8z" fill="url(#edge)" stroke="#1a1a1a"/>
                <ellipse cx="1162" cy="628" rx="262" ry="140" fill="#0b5c0d" stroke="#1a1a1a"/>
                <ellipse cx="1162" cy="627" rx="252" ry="137" fill="none" stroke="#1a1a1a"/>
                <ellipse cx="1162" cy="626" rx="248" ry="134" fill="#1a1a1a"/>
                <ellipse cx="1162" cy="624" rx="240" ry="128" fill="#5c0606"/>
                <!-- inner wall seen through the cut -->
                <use href="#innerShape" fill="url(#inner)"/>
                <path d="M1280 305L1309 301V314z" fill="#8a5223"/>
                <g id="innerRings" clip-path="url(#innerClip)" fill="none" stroke="#1a1a1a"></g>
                <path d="M1014 518A248 134 0 0 1 1162 493 248 134 0 0 1 1309 518" fill="none" stroke="#1a1a1a" stroke-width="5"/>
                <!-- outer wall -->
                <path d="M911 425A251 134 0 0 0 1010 529V733A251 134 0 0 1 911 626z" fill="url(#wall)"/>
                <g id="outerRings" clip-path="url(#leftClip)" fill="none" stroke="#1a1a1a"></g>
                <!-- ring beam and dome -->
                <path d="M909 403V427A252 134 0 0 0 1010 530V510z" fill="url(#band)" stroke="#1a1a1a"/>
                <path d="M909 408A252 134 0 0 0 1010 517M909 416A252 134 0 0 0 1010 524" fill="none" stroke="#1a1a1a"/>
                <path d="M1012 511A253 135 0 0 1 909 403 253 135 0 0 1 1162 268 253 135 0 0 1 1311 294V301C1270 303 1235 311 1201 328 1160 350 1130 373 1094 410 1065 440 1040 475 1012 511z" fill="#6e421b" stroke="#1a1a1a"/>
                <path d="M1013 506A246 130 0 0 1 916 403 246 130 0 0 1 1162 273 246 130 0 0 1 1308 298C1268 301 1235 309 1200 326 1158 348 1128 371 1092 408 1063 438 1038 473 1013 506z" fill="url(#roof)" stroke="#1a1a1a" stroke-width="1.500"/>
                <path d="M1055 457A178 95 0 0 1 984 382 178 95 0 0 1 1162 287 178 95 0 0 1 1266 305" fill="none" stroke="#1a1a1a"/>
                <path d="M1022 296A246 130 0 0 1 1162 273 246 130 0 0 1 1300 295" fill="none" stroke="#c88040" stroke-dasharray="4 5"/>
                <path d="M1062 303A178 95 0 0 1 1162 287 178 95 0 0 1 1260 303" fill="none" stroke="#c88040" stroke-dasharray="4 8"/>
                <path d="M1147 273.500h30" stroke="#f0a050"/>
                <path d="M1010 510V735M1310 297V512" stroke="#101c30" stroke-width="2"/>
                <g id="mesh" fill="none" stroke="#0000ff" shape-rendering="crispEdges"></g>
                <!-- axis triad -->
                <g stroke-width="2"><path d="M520 918V893" stroke="#00f"/><path d="M520 918L532 909" stroke="#f00"/><path d="M520 918L503 911" stroke="#0d0"/></g>
                <path d="M517 902h6l-3-9z" fill="#00f"/><path d="M534 907l-8 3 4 4z" fill="#f00"/><path d="M501 910l8 0-2 6z" fill="#0d0"/>
                <g class="triad"><text x="522" y="892" fill="#00f">Z</text><text x="535" y="909" fill="#f00">X</text><text x="503" y="911" fill="#0d0">Y</text></g>
            </svg>
        </div>
        <div class="view-tabs">
            <button><svg width="20" height="20"><use href="#i-logo"/></svg>Stload_Dead-三维*</button>
        </div>
    </section>
</main>

<footer class="status">
    <span>Preselected: CapPart9 - Stload_Dead.CapPart9.;#9c;:G;RVL;:T1022:3:E.Edge2 (-50264.7, -785.728, -1600)</span>
    <span class="extent">2.2e+02 m x 1.5e+02 m</span>
</footer>

<script src="model.js"></script>
</body>
</html>
```
FILE: styles.css
```css
* {
    box-sizing: border-box;
}
body {
    margin: 0;
    height: 100vh;
    display: flex;
    flex-direction: column;
    overflow: hidden;
    background: #ecedef;
    color: #333;
    font-family: "Noto Sans", "Noto Sans CJK SC", sans-serif;
    font-size: 15px;
    line-height: 20px;
}
button {
    border: none;
    background: none;
    padding: 0;
    margin: 0;
    color: inherit;
    font: inherit;
    white-space: nowrap;
}
svg {
    display: block;
    flex: none;
    overflow: visible;
}
h1, h2 {
    margin: 0;
    font-size: 15px;
    font-weight: normal;
}
ul {
    list-style: none;
    margin: 0;
    padding: 0;
}
.defs {
    position: absolute;
}

/* title bar */
.titlebar {
    display: grid;
    grid-template-columns: 1fr auto 1fr;
    align-items: center;
    height: 37px;
    flex: none;
    padding-left: 2px;
}
.titlebar h1 {
    padding-left: 50px;
    font-size: 16px;
}
.quick {
    display: flex;
    align-items: center;
    gap: 8px;
}
.quick-sep {
    width: 1px;
    height: 18px;
    background: #c8cacc;
}
.window-buttons {
    display: flex;
    justify-content: flex-end;
    gap: 49px;
    padding-right: 25px;
}

/* ribbon tabs */
.tabs {
    display: flex;
    height: 33px;
    flex: none;
    background: #fff;
}
.tabs button {
    padding: 0 13px;
}
.tabs .file {
    padding: 0 23px;
    background: #2a5699;
    color: #fff;
}
.tabs .active {
    height: 34px;
    padding: 0 12px;
    background: #fff;
    border: 1px solid #9a9fa4;
    border-bottom: none;
    color: #2a5699;
    z-index: 1;
}
.tabs .collapse {
    margin-left: auto;
    padding: 0 6px;
}

/* ribbon */
.ribbon {
    display: flex;
    flex: none;
    height: 101px;
    padding: 2px 0 3px;
    background: #fff;
    border: 1px solid #d0d2d4;
    border-left: none;
}
.group {
    display: flex;
    padding: 0 2px 0 4px;
    border-right: 1px solid #d0d2d4;
}
.group:first-child {
    padding: 0 3px 0 5px;
}
.big {
    display: flex;
    flex-direction: column;
    align-items: center;
    gap: 7px;
    padding: 9px 9px 0;
}
.big svg {
    width: 40px;
    height: 40px;
    margin: 0 -5px;
}
.big.drop::after {
    content: "";
    border: 4px solid transparent;
    border-top: 5px solid #777;
    border-bottom: none;
}
.mark {
    font: bold 9px "Liberation Sans", sans-serif;
    fill: #c03010;
}
.letter {
    font: bold 22px "Open Sans", sans-serif;
    fill: #2c4068;
}
.tiny {
    font: italic 9px "Liberation Sans", sans-serif;
    fill: #2c4068;
}
.axis {
    font: 9px "Open Sans", sans-serif;
    fill: #222;
}
.tri {
    font: bold 7px "Open Sans", sans-serif;
    fill: #222;
}
.small-group {
    padding: 0 0 0 10px;
}
.column {
    width: 96px;
    padding-top: 6px;
    display: flex;
    flex-direction: column;
    justify-content: center;
}
.column.wide {
    width: 110px;
}
.column.last {
    width: 93px;
}
.small {
    display: flex;
    flex: none;
    align-items: center;
    gap: 4px;
    height: 32px;
}
.small svg {
    width: 18px;
    height: 18px;
}
.arrow {
    border: 4px solid transparent;
    border-top: 5px solid #777;
    border-bottom: none;
    margin: 0 14px 0 auto;
}
.wide .arrow,
.last .arrow {
    margin-right: 10px;
}
.ribbon-rest {
    flex: 1;
    background:
        linear-gradient(#d0d2d4, #d0d2d4) 93px 100% / 1px 2px no-repeat,
        linear-gradient(#d0d2d4, #d0d2d4) 204px 100% / 1px 2px no-repeat;
}

/* left dock */
main {
    flex: 1;
    display: flex;
    min-height: 0;
    padding-right: 3px;
}
.dock {
    width: 455px;
    margin-right: 7px;
    flex: none;
    display: flex;
    flex-direction: column;
}
.dock-title {
    display: flex;
    align-items: center;
    gap: 14px;
    height: 28px;
    flex: none;
    padding: 0 8px 0 5px;
    color: #5d7289;
}
.dock-title h2 {
    flex: 1;
}
.dock-title.second {
    height: 35px;
    padding-top: 4px;
}
.tree-box {
    flex: 504 1 0;
    min-height: 0;
    display: flex;
    overflow: hidden;
    background: #fff;
    border: 1px solid #a7adb2;
}
.tree {
    flex: 1;
}
.tree ul {
    padding-left: 25px;
}
.tree .branch {
    margin-left: -25px;
    padding-left: 50px;
    background: linear-gradient(#dcdcdc, #dcdcdc) 36px 0 / 2px 100% no-repeat;
}
.row {
    display: flex;
    align-items: center;
    height: 22px;
    padding-left: 5px;
    white-space: nowrap;
}
.row button svg {
    width: 14px;
    height: 14px;
}
.row > svg {
    width: 19px;
    height: 19px;
    margin: 0 7px 0 9px;
}
.row.off {
    color: #707070;
}
.stub {
    width: 13px;
    height: 11px;
    margin: 0 0 10px 6px;
    border: solid #dcdcdc;
    border-width: 0 0 2px 2px;
}
.row > .stub + svg {
    margin-left: 4px;
}
.scroll {
    display: flex;
    flex-direction: column;
    align-items: center;
    width: 14px;
    padding: 19px 0 4px;
}
.scroll .up,
.scroll .down {
    border: 4px solid transparent;
    border-bottom: 4px solid #5c6a74;
    border-top: none;
}
.scroll .down {
    border-top: 4px solid #5c6a74;
    border-bottom: none;
}
.scroll .thumb {
    width: 6px;
    height: 84%;
    margin: 4px 0 auto;
    background: #acb2b6;
}
.props-box {
    flex: 236 1 0;
    border: 1px solid #a7adb2;
}
.props {
    width: 100%;
    border-collapse: collapse;
    background: #acb1b5;
}
.props th {
    height: 25px;
    padding: 0 11px;
    font-weight: normal;
    text-align: left;
    border-bottom: 1px solid #8e9498;
}
.props th:first-child {
    width: 124px;
    padding-left: 10px;
    border-right: 1px solid #959b9f;
}
.dock-tabs {
    display: flex;
    height: 22px;
    flex: none;
    padding-left: 6px;
    gap: 8px;
    background: #fff;
    border: solid #a7adb2;
    border-width: 0 1px;
}
.dock-tabs .pressed {
    height: 19px;
    margin-top: 3px;
    padding: 0 7px;
    background: #a9afb3;
    border: 1px solid #6c7276;
    border-bottom: none;
}

/* viewport side */
.workspace {
    flex: 1;
    display: flex;
    flex-direction: column;
    min-width: 0;
}
.toolbar {
    display: flex;
    align-items: center;
    gap: 10px;
    height: 36px;
    flex: none;
    padding-left: 4px;
    background: #fff;
}
.toolbar svg {
    width: 28px;
    height: 28px;
}
.toolbar .menu {
    display: flex;
    align-items: center;
    gap: 2px;
}
.toolbar .chev {
    width: 8px;
    height: 6px;
}
.toolbar .sep {
    width: 1px;
    height: 28px;
    margin: 0 -4px;
    background: #cfd1d3;
}
.viewport {
    flex: 1;
    min-height: 0;
    border: 1px solid #a7adb2;
    border-bottom: none;
    background: linear-gradient(#b9cde6, #e9eaec);
}
.model {
    width: 100%;
    height: 100%;
}
.triad {
    font: 11px "Open Sans", sans-serif;
}
.view-tabs {
    height: 20px;
    flex: none;
    background: #e9eaec;
    border: solid #a7adb2;
    border-width: 0 1px;
}
.view-tabs button {
    display: flex;
    align-items: center;
    gap: 10px;
    height: 20px;
    padding-right: 8px;
    background: #fff;
    border: 1px solid #a7adb2;
    border-width: 1px 1px 0 0;
}

/* status bar */
.status {
    display: flex;
    justify-content: space-between;
    align-items: center;
    height: 34px;
    flex: none;
    padding-left: 6px;
    border: solid #a7a7a7;
    border-width: 1px 0;
    color: #6a6a6a;
    font-family: "Open Sans", sans-serif;
    font-size: 16px;
    white-space: nowrap;
}
.extent {
    color: #333;
}
```
FILE: model.js
```js
var NS = 'http://www.w3.org/2000/svg';

function addPath(parent, d, attrs) {
    var p = document.createElementNS(NS, 'path');
    p.setAttribute('d', d);
    for (var k in attrs) p.setAttribute(k, attrs[k]);
    parent.appendChild(p);
}

// piles: x, tip y (back rows first)
var backPiles = [
    [928, 818], [936, 795], [944, 800], [951, 822], [958, 792], [966, 812], [975, 825], [987, 846], [1001, 834],
    [1014, 868], [1026, 867], [1034, 833], [1053, 841], [1062, 878], [1072, 890], [1081, 883], [1109, 863],
    [1118, 902], [1128, 875], [1142, 869], [1156, 888], [1166, 898], [1178, 892], [1193, 880],
    [1208, 896], [1223, 881], [1231, 888], [1240, 864], [1253, 882], [1264, 890], [1276, 879], [1289, 847],
    [1302, 841], [1316, 831], [1330, 821], [1344, 811], [1366, 779], [1327, 862], [1341, 854]
];
var midPiles = [
    [972, 874], [962, 861], [985, 885], [998, 895], [1014, 903], [1031, 910], [1050, 917], [1070, 920],
    [1085, 903], [1104, 910], [1123, 916], [1099, 892], [1146, 888], [1170, 911], [1160, 932], [1182, 934],
    [1205, 934], [1189, 920], [1221, 918], [1227, 933], [1249, 931], [1269, 928], [1245, 882], [1259, 872],
    [1283, 898], [1297, 888], [1312, 877], [1368, 864], [1377, 853], [1389, 840]
];
var frontPiles = [
    [929, 825], [934, 838], [940, 851], [947, 863], [956, 875], [966, 885], [978, 894], [991, 903], [1006, 910],
    [1022, 917], [1040, 921], [1056, 925], [1075, 927], [1095, 928], [1115, 931], [1135, 935], [1155, 938],
    [1175, 939], [1196, 941], [1216, 941], [1236, 940], [1255, 939], [1274, 936], [1291, 931], [1309, 925],
    [1324, 918], [1338, 909], [1351, 901], [1362, 893], [1372, 883], [1381, 874], [1389, 864], [1393, 853],
    [1396, 841], [1397, 828]
];

var piles = document.getElementById('piles');
addPath(piles, 'M926 640V765L950 782 985 795 1050 808 1162 822 1260 812 1320 790 1350 765 1364 780 1400 780V640z', { fill: '#ffaa00' });

function drawPile(x, tip, w) {
    var l = x - w / 2;
    function seg(y1, y2, color) {
        addPath(piles, 'M' + l + ' ' + y1 + 'h' + w + 'V' + y2 + 'h-' + w + 'z', { fill: color });
    }
    seg(690, tip - 69, '#ffaa00');
    seg(tip - 69, tip - 34, '#00ff00');
    seg(tip - 34, tip - 2, '#00ffff');
    seg(tip - 2, tip + 2, '#ff50ff');
}

// inner rows, on an ellipse around the tank axis
for (var row = 0; row < 3; row++) {
    for (var px = 934 + row * 4; px < 1394; px += 11) {
        var t = (px - 1162) / 240;
        drawPile(px, Math.round(800 + row * 12 + 60 * Math.sqrt(1 - t * t) + (px * 7) % 19), 4);
    }
}
backPiles.forEach(function (p) { drawPile(p[0], p[1], 4); });
midPiles.forEach(function (p) { drawPile(p[0], p[1], 5); });
frontPiles.forEach(function (p) { drawPile(p[0], p[1], 5); });

// course lines on the inner and outer wall
var inner = document.getElementById('innerRings');
[298, 301, 377, 425, 445, 460, 467, 471].forEach(function (y) {
    addPath(inner, 'M915 ' + (y + 130) + 'A247 130 0 0 1 1409 ' + (y + 130));
});
var outer = document.getElementById('outerRings');
[540, 543, 617, 666, 685, 700, 708, 712].forEach(function (y) {
    addPath(outer, 'M911 ' + (y - 107) + 'A251 134 0 0 0 1162 ' + (y + 27));
});

// prestress tendons: hoops get closer towards the base
var mesh = document.getElementById('mesh');
var d = '';
for (var c = 405; c < 620; c += 2.8 - 0.8 * (c - 405) / 215) {
    d += 'M1012 ' + (c + 105) + 'A247 132 0 0 0 1162 ' + (c + 132) + 'A247 132 0 0 0 1409 ' + c + 'A247 132 0 0 0 1312 ' + (c - 105);
}
addPath(mesh, d, { 'stroke-width': 1.2 });

// vertical tendons
d = '';
for (var a = -0.92; a < 2.23; a += 0.0385) {
    var x = 1162 + 247 * Math.cos(a);
    var y = 132 * Math.sin(a);
    d += 'M' + x + ' ' + (405 + y) + 'V' + (628 + y);
}
addPath(mesh, d, { 'stroke-width': 1 });
```
